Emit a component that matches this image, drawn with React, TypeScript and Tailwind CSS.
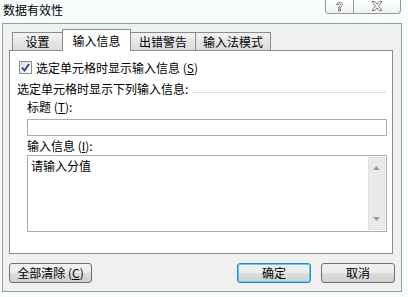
import React from "react";

const font = { fontFamily: '"Noto Sans CJK SC", "Microsoft YaHei", sans-serif' };

function Tab({ label, w, selected }: { label: string; w: string; selected?: boolean }) {
  if (selected) {
    return (
      <div
        className={`${w} h-[22px] -mb-px relative z-10 bg-white border border-b-0 border-[#898c95] flex items-center justify-center text-[12px] text-black`}
      >
        {label}
      </div>
    );
  }
  return (
    <div
      className={`${w} h-[18px] bg-gradient-to-b from-[#f2f2f2] to-[#dcdcdc] border border-b-0 border-[#898c95] -ml-px first:ml-0 flex items-center justify-center text-[12px] text-black leading-none`}
    >
      {label}
    </div>
  );
}

function Btn({ children, w, focus }: { children: React.ReactNode; w: string; focus?: boolean }) {
  return (
    <div
      className={`${w} h-[20px] rounded-[3px] border ${
        focus ? "border-[#3c7fb1] shadow-[inset_0_0_0_1px_#48d1f9]" : "border-[#707070]"
      } bg-[linear-gradient(#f2f2f2_0%,#ebebeb_50%,#dddddd_51%,#cfcfcf_100%)] flex items-center justify-center text-[12px] text-black leading-none`}
    >
      {children}
    </div>
  );
}

export default function App() {
  return (
    <div className="w-[408px] h-[297px] bg-[#f7fcfd] overflow-hidden text-black" style={font}>
      {/* title bar */}
      <div className="h-[23px] flex justify-between items-start">
        <div className="pl-[3px] pt-[2px] text-[12px] leading-[16px] text-black">数据有效性</div>
        <div className="mr-[7px] -mt-px flex h-[15px] border border-t-0 border-[#9a9a9a] rounded-b-[4px] bg-gradient-to-b from-[#ffffff] to-[#eef2f5]">
          <div className="w-[28px] flex items-center justify-center border-r border-[#9a9a9a]">
            <svg width="9" height="11" viewBox="0 0 9 11">
              <path
                d="M1.5 3.5 C1.5 0.8 7.5 0.8 7.5 3.5 C7.5 5.2 5.5 5.3 5.5 7 L3.5 7 C3.5 5 5.5 4.8 5.5 3.6 C5.5 2.6 3.5 2.6 3.5 3.6 Z M3.5 8 L5.5 8 L5.5 10 L3.5 10 Z"
                fill="#ffffff"
                stroke="#6d6d6d"
                strokeWidth="0.9"
              />
            </svg>
          </div>
          <div className="w-[46px] flex items-center justify-center">
            <svg width="12" height="10" viewBox="0 0 12 10">
              <path
                d="M1 0.5 L3.8 0.5 L6 3.2 L8.2 0.5 L11 0.5 L7.5 5 L11 9.5 L8.2 9.5 L6 6.8 L3.8 9.5 L1 9.5 L4.5 5 Z"
                fill="#ffffff"
                stroke="#6d6d6d"
                strokeWidth="0.9"
              />
            </svg>
          </div>
        </div>
      </div>

      {/* dialog body */}
      <div className="ml-[2px] w-[400px] h-[269px] bg-[#f0f0f0] border border-[#9c9c9c] flex flex-col">
        <div className="pl-[6px] pt-[6px]">
          {/* tab strip */}
          <div className="flex items-end h-[20px] pl-[3px]">
            <Tab label="设置" w="w-[51px]" />
            <Tab label="输入信息" w="w-[69px] -ml-px" selected />
            <div className="-ml-px flex items-end">
              <Tab label="出错警告" w="w-[66px]" />
              <Tab label="输入法模式" w="w-[76px]" />
            </div>
          </div>
          {/* panel */}
          <div className="w-[384px] h-[204px] bg-white border border-[#898c95] flex flex-col text-[12px] leading-[16px]">
            <div className="flex items-center pl-[9px] pt-[9px] h-[24px]">
              <div className="w-[13px] h-[13px] border border-[#8e8f8f] bg-gradient-to-br from-[#dcdcdc] to-[#ffffff] flex items-center justify-center">
                <svg width="9" height="9" viewBox="0 0 9 9">
                  <path d="M1 4.5 L3.5 7.5 L8 1" fill="none" stroke="#2a3e8f" strokeWidth="1.8" />
                </svg>
              </div>
              <span className="ml-[4px]">
                选定单元格时显示输入信息 (<span className="underline">S</span>)
              </span>
            </div>
            <div className="flex items-center pl-[7px] mt-[6px] h-[16px]">
              <span>选定单元格时显示下列输入信息:</span>
              <div className="flex-1 ml-[4px] mr-[6px] mt-[6px] h-px bg-[#d5dfe5]" />
            </div>
            <div className="pl-[17px] mt-[2px]">
              标题 (<span className="underline">T</span>):
            </div>
            <div className="ml-[17px] mt-[4px] w-[360px] h-[17px] border border-[#abadb3] bg-white" />
            <div className="pl-[17px] mt-[2px]">
              输入信息 (<span className="underline">I</span>):
            </div>
            <div className="ml-[17px] mt-px w-[360px] h-[77px] border border-[#abadb3] bg-white flex">
              <div className="flex-1 pl-[3px] pt-[2px]">请输入分值</div>
              <div className="w-[17px] my-[1px] mr-[1px] bg-[#eaeaea] border border-[#e0e0e0] flex flex-col justify-between items-center py-[8px]">
                <svg width="7" height="4" viewBox="0 0 7 4">
                  <path d="M0 4 L3.5 0 L7 4 Z" fill="#9a9a9a" />
                </svg>
                <svg width="7" height="4" viewBox="0 0 7 4">
                  <path d="M0 0 L3.5 4 L7 0 Z" fill="#9a9a9a" />
                </svg>
              </div>
            </div>
          </div>
        </div>
        {/* buttons */}
        <div className="flex items-center pl-[6px] pr-[6px] mt-[9px]">
          <Btn w="w-[83px]">
            全部清除 (<span className="underline">C</span>)
          </Btn>
          <div className="flex-1" />
          <Btn w="w-[74px]" focus>
            确定
          </Btn>
          <div className="w-[10px]" />
          <Btn w="w-[74px]">取消</Btn>
        </div>
      </div>
    </div>
  );
}
